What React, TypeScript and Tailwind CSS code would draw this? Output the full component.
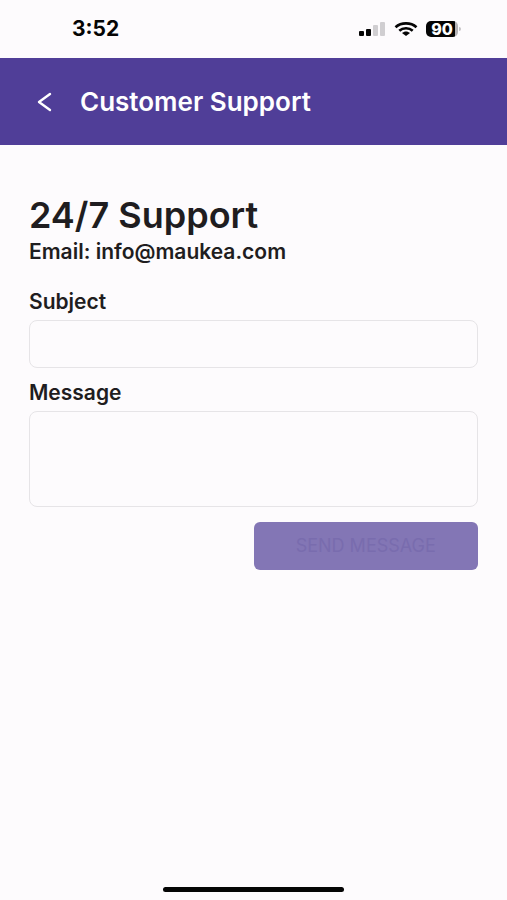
import React, { useState } from 'react';

function SignalIcon() {
  return (
    <svg width="27" height="14" viewBox="0 0 27 14" aria-hidden="true">
      <rect x="0" y="9" width="5" height="5" rx="1" fill="#050505" />
      <rect x="7" y="7" width="5" height="7" rx="1" fill="#050505" />
      <rect x="14" y="3" width="5" height="11" rx="1" fill="#d0ced1" />
      <rect x="21" y="0" width="5" height="14" rx="1" fill="#d0ced1" />
    </svg>
  );
}

function WifiIcon() {
  return (
    <svg width="24" height="14" viewBox="0 0 24 14" fill="none" stroke="#050505" strokeWidth="2.7" aria-hidden="true">
      <path d="M1.5 5.2C7.3 0.1 16.7 0.1 22.5 5.2" />
      <path d="M5.3 8.7C9 5.4 15 5.4 18.7 8.7" />
      <path d="M8 11.1C10.2 9 13.8 9 16 11.1L12 14Z" fill="#050505" stroke="none" />
    </svg>
  );
}

function BatteryIcon({ level }: { level: number }) {
  return (
    <div className="flex items-center gap-px">
      <div className="flex h-4 w-8 items-center justify-center rounded-[5px] bg-linear-to-r from-[#050505] from-90% to-[#b5b3b6] to-90% text-base leading-4 font-extrabold text-white">
        {level}
      </div>
      <div className="h-1 w-0.5 rounded-r-full bg-[#c4c2c5]" />
    </div>
  );
}

const LABEL_CLASS = 'block pb-0.5 text-[21px] leading-8 font-semibold';

const FIELD_CLASS =
  'block w-full rounded-lg border border-[#e6e4e7] bg-transparent px-3 text-lg outline-none focus:border-[#503e98]';

export default function App() {
  const [subject, setSubject] = useState('');
  const [message, setMessage] = useState('');

  const canSend = subject.trim() !== '' && message.trim() !== '';

  return (
    <div className="flex min-h-screen flex-col bg-[#fdfbfd] font-['Inter',sans-serif] text-[#1f1d20]">
      {/* Status bar */}
      <div className="flex h-[58px] items-center justify-between pr-[46px] pl-[72px]">
        <span className="text-[21px] font-bold text-[#050505]">3:52</span>
        <div className="flex items-center gap-2">
          <SignalIcon />
          <WifiIcon />
          <BatteryIcon level={90} />
        </div>
      </div>

      {/* Header */}
      <header className="flex h-[87px] items-center bg-[#503e98] pl-9 text-white">
        <button type="button" aria-label="Back" className="flex w-11 items-center">
          <svg width="16" height="20" viewBox="0 0 16 20" fill="none" stroke="currentColor" strokeWidth="2.4" strokeLinecap="round" strokeLinejoin="round" aria-hidden="true">
            <path d="M14 2L3 10L14 18" />
          </svg>
        </button>
        <h1 className="text-[26px] font-semibold">Customer Support</h1>
      </header>

      <main className="px-[29px] pt-[49px]">
        <h2 className="text-4xl leading-[42px] font-semibold">24/7 Support</h2>
        <p className="text-[21px] leading-8 font-semibold">Email: info@maukea.com</p>

        <form className="mt-[18px]" onSubmit={(e) => e.preventDefault()}>
          <label htmlFor="subject" className={LABEL_CLASS}>
            Subject
          </label>
          <input
            id="subject"
            type="text"
            value={subject}
            onChange={(e) => setSubject(e.target.value)}
            className={`${FIELD_CLASS} h-12`}
          />
          <label htmlFor="message" className={`${LABEL_CLASS} mt-[9px]`}>
            Message
          </label>
          <textarea
            id="message"
            value={message}
            onChange={(e) => setMessage(e.target.value)}
            className={`${FIELD_CLASS} h-24 resize-none py-2`}
          />
          <button
            type="submit"
            disabled={!canSend}
            className="mt-[15px] ml-auto block h-12 w-1/2 rounded-md bg-[#503e98] text-lg text-white disabled:bg-[#8376b5] disabled:text-[#796cae]"
          >
            SEND MESSAGE
          </button>
        </form>
      </main>

      {/* Home indicator */}
      <div className="mx-auto mt-auto mb-2 h-[5px] w-[181px] rounded-full bg-[#050505]" />
    </div>
  );
}
